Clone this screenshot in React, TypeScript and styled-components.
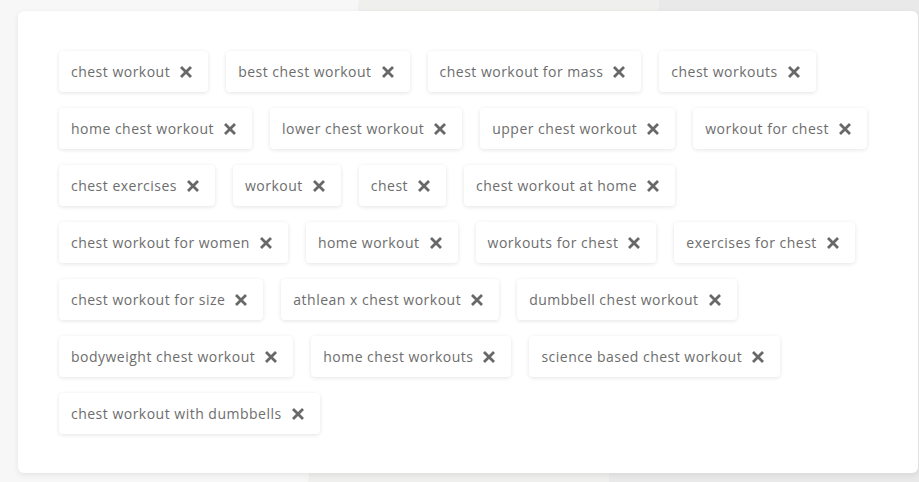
import React from 'react';
import styled, { createGlobalStyle } from 'styled-components';

const GlobalStyle = createGlobalStyle`
  html, body {
    margin: 0;
    padding: 0;
    height: 482px;
    overflow: hidden;
  }
  body {
    font-family: 'Open Sans', 'Liberation Sans', sans-serif;
    background: linear-gradient(96deg, #f7f7f7 0 37%, #efefee 37% 68%, #e9e9e9 68%);
  }
`;

const Page = styled.div`
  padding: 11px 0 0 18px;
`;

const Card = styled.div`
  width: 900px;
  box-sizing: border-box;
  background: #fff;
  border-radius: 6px;
  box-shadow: 0 2px 6px rgba(0, 0, 0, 0.08);
  padding: 40px 41px 39px;
`;

const TagList = styled.div`
  display: flex;
  flex-wrap: wrap;
  gap: 16px 18px;
`;

const Tag = styled.div`
  display: flex;
  align-items: center;
  gap: 10px;
  height: 41px;
  box-sizing: border-box;
  padding: 0 16px 0 12px;
  background: #fff;
  border-radius: 4px;
  box-shadow: 0 1px 4px rgba(0, 0, 0, 0.11);
  font-size: 14px;
  letter-spacing: 0.49px;
  color: #6d6d6d;
  white-space: nowrap;
`;

const Remove = styled.button`
  display: flex;
  align-items: center;
  justify-content: center;
  width: 12px;
  height: 12px;
  padding: 0;
  border: 0;
  background: none;
  cursor: pointer;
  color: #686868;
`;

const keywords = [
  'chest workout',
  'best chest workout',
  'chest workout for mass',
  'chest workouts',
  'home chest workout',
  'lower chest workout',
  'upper chest workout',
  'workout for chest',
  'chest exercises',
  'workout',
  'chest',
  'chest workout at home',
  'chest workout for women',
  'home workout',
  'workouts for chest',
  'exercises for chest',
  'chest workout for size',
  'athlean x chest workout',
  'dumbbell chest workout',
  'bodyweight chest workout',
  'home chest workouts',
  'science based chest workout',
  'chest workout with dumbbells',
];

function CrossIcon() {
  return (
    <svg width="12" height="12" viewBox="0 0 12 12">
      <path d="M1 1 L11 11 M11 1 L1 11" stroke="currentColor" strokeWidth="2.8" strokeLinecap="butt" />
    </svg>
  );
}

export default function App() {
  return (
    <Page>
      <GlobalStyle />
      <Card>
        <TagList>
          {keywords.map((word) => (
            <Tag key={word}>
              <span>{word}</span>
              <Remove aria-label={`remove ${word}`}>
                <CrossIcon />
              </Remove>
            </Tag>
          ))}
        </TagList>
      </Card>
    </Page>
  );
}
